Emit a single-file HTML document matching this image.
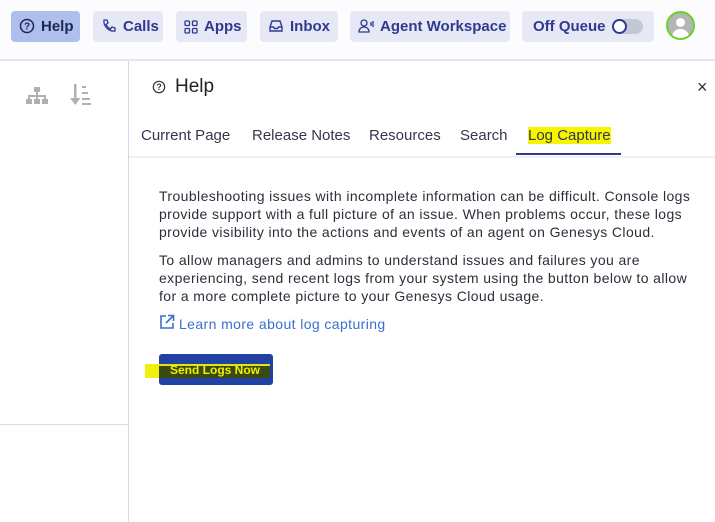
<!DOCTYPE html>
<html><head><style>
body{margin:0;width:715px;height:522px;background:#fff;font-family:"Liberation Sans",sans-serif;position:relative;overflow:hidden}
.top{position:absolute;left:0;top:0;width:715px;height:59px;background:#fcfcfe;border-bottom:2px solid #e3e6f3}
.b{position:absolute;top:11px;height:31px;border-radius:4px;background:#e6e8f6;color:#2f3a8f;font-weight:bold;font-size:15px;line-height:31px;box-sizing:border-box;padding-left:8px;white-space:nowrap}
.b svg{vertical-align:-3px;margin-right:6px}
.left{position:absolute;left:0;top:61px;width:128px;height:461px;border-right:1px solid #d5d9ee}
.hl{position:absolute;left:0;top:424px;width:128px;border-top:1px solid #dcdcdc}
.t{position:absolute;top:127px;font-size:15px;color:#33384a}
p{position:absolute;left:159px;margin:0;font-size:14px;line-height:18px;color:#2b2f3a;width:540px;letter-spacing:0.4px}
</style></head><body>
<div class="top">
<div class="b" style="left:11px;width:69px;background:#aebfee;color:#1f2650"><svg width="16" height="16" viewBox="0 0 16 16"><circle cx="8" cy="8" r="6.5" fill="none" stroke="#1f2650" stroke-width="1.5"/><text x="8" y="11.5" font-size="10" text-anchor="middle" fill="#1f2650" font-weight="bold">?</text></svg>Help</div>
<div class="b" style="left:93px;width:70px"><svg width="16" height="16" viewBox="0 0 16 16"><path d="M3 2l3 0 1 3-2 1.5c1 2 2.5 3.5 4.5 4.5L11 9l3 1v3c-6 1-12-5-11-11z" fill="none" stroke="#2f3a8f" stroke-width="1.3"/></svg>Calls</div>
<div class="b" style="left:176px;width:71px"><svg width="14" height="14" viewBox="0 0 14 14" fill="none" stroke="#2f3a8f" stroke-width="1.3"><rect x="1" y="1" width="4.5" height="4.5" rx="1"/><rect x="8.5" y="1" width="4.5" height="4.5" rx="1"/><rect x="1" y="8.5" width="4.5" height="4.5" rx="1"/><rect x="8.5" y="8.5" width="4.5" height="4.5" rx="1"/></svg>Apps</div>
<div class="b" style="left:260px;width:78px"><svg width="16" height="16" viewBox="0 0 16 16" fill="none" stroke="#2f3a8f" stroke-width="1.4"><path d="M2 9l2-6h8l2 6v4H2z M2 9h3.5l1 1.5h3l1-1.5H14"/></svg>Inbox</div>
<div class="b" style="left:350px;width:160px"><svg width="16" height="16" viewBox="0 0 16 16" fill="none" stroke="#2f3a8f" stroke-width="1.3"><circle cx="6" cy="5" r="3"/><path d="M1 14c0-3 2-5 5-5s5 2 5 5z M13 4v4 M15 3v6"/></svg>Agent Workspace</div>
<div class="b" style="left:522px;width:132px;padding-left:11px">Off Queue <span style="display:inline-block;vertical-align:-3px;width:31px;height:15px;border-radius:8px;background:#c4c8d4;position:relative;margin-left:2px"><span style="position:absolute;left:0;top:0;width:11px;height:11px;border:2px solid #2f3a8f;border-radius:50%;background:#fff"></span></span></div>
<div style="position:absolute;left:666px;top:11px;width:25px;height:25px;border:2.5px solid #6cd12a;border-radius:50%;background:#b5b5b5;overflow:hidden"><div style="position:absolute;left:8px;top:5px;width:9px;height:9px;border-radius:50%;background:#fff"></div><div style="position:absolute;left:4px;top:16px;width:17px;height:12px;border-radius:8px 8px 0 0;background:#fff"></div></div>
</div>
<div class="left"><div class="hl" style="top:363px"></div>
<svg style="position:absolute;left:26px;top:25px" width="22" height="20" viewBox="0 0 22 20" fill="#b0b0b0"><rect x="8" y="1" width="6" height="5"/><rect x="10" y="6" width="2" height="4"/><rect x="2" y="9" width="18" height="2"/><rect x="2" y="9" width="2" height="4"/><rect x="10" y="9" width="2" height="4"/><rect x="18" y="9" width="2" height="4"/><rect x="0" y="13" width="6" height="5"/><rect x="8" y="13" width="6" height="5"/><rect x="16" y="13" width="6" height="5"/></svg>
<svg style="position:absolute;left:70px;top:22px" width="22" height="24" viewBox="0 0 22 24" fill="#b0b0b0"><rect x="4" y="1" width="2.5" height="18"/><path d="M0 15l5.25 7 5.25-7z"/><rect x="12" y="3" width="4" height="2"/><rect x="12" y="9" width="6" height="2"/><rect x="12" y="15" width="8" height="2"/><rect x="12" y="20" width="9" height="2"/></svg>
</div>
<svg style="position:absolute;left:152px;top:80px" width="14" height="14" viewBox="0 0 16 16"><circle cx="8" cy="8" r="6.5" fill="none" stroke="#333" stroke-width="1.4"/><text x="8" y="11.5" font-size="10" text-anchor="middle" fill="#333" font-weight="bold">?</text></svg>
<div style="position:absolute;left:175px;top:76px;font-size:19px;color:#222">Help</div>
<div style="position:absolute;left:697px;top:77px;font-size:18px;color:#333">×</div>
<div style="position:absolute;left:129px;top:156px;width:586px;border-top:2px solid #eeeff3"></div>
<div class="t" style="left:141px">Current Page</div>
<div class="t" style="left:252px">Release Notes</div>
<div class="t" style="left:369px">Resources</div>
<div class="t" style="left:460px">Search</div>
<div class="t" style="left:528px;background:#f5f500;line-height:17px">Log Capture</div>
<div style="position:absolute;left:516px;top:153px;width:105px;height:2px;background:#2f3a8f"></div>
<p style="top:187px">Troubleshooting issues with incomplete information can be difficult. Console logs provide support with a full picture of an issue. When problems occur, these logs provide visibility into the actions and events of an agent on Genesys Cloud.</p>
<p style="top:251px">To allow managers and admins to understand issues and failures you are experiencing, send recent logs from your system using the button below to allow for a more complete picture to your Genesys Cloud usage.</p>
<svg style="position:absolute;left:159px;top:314px" width="16" height="16" viewBox="0 0 16 16" fill="none" stroke="#3a6fcf" stroke-width="1.6"><path d="M7 2H2v12h12V9 M9 1.5h5.5V7 M14.5 1.5L7 9"/></svg>
<div style="position:absolute;left:179px;top:316px;font-size:14px;color:#3a6fcf;letter-spacing:0.4px">Learn more about log capturing</div>
<div style="position:absolute;left:159px;top:354px;width:114px;height:31px;border-radius:3px;background:#2141a3"></div>
<div style="position:absolute;left:145px;top:364px;width:125px;height:14px;background:#eef000;opacity:.95"></div>
<div style="position:absolute;left:159px;top:366px;width:111px;height:12px;background:#3a4a10"></div>
<div style="position:absolute;left:170px;top:363px;font-size:12px;font-weight:bold;color:#f0f000">Send Logs Now</div>
</body></html>
